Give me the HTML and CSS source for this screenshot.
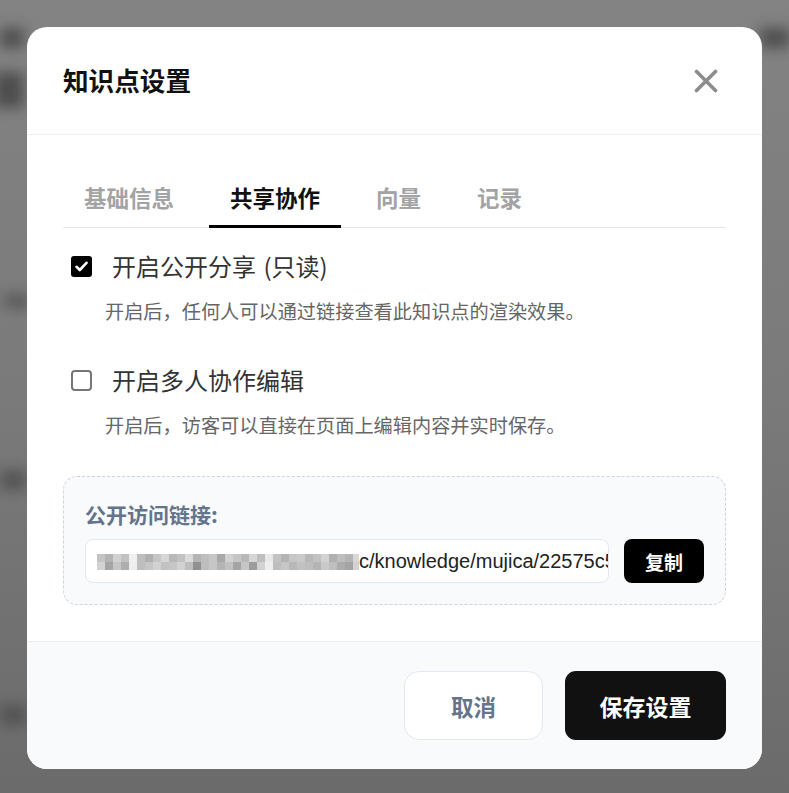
FILE: index.html
```html
<!DOCTYPE html>
<html lang="zh-CN">
<head>
<meta charset="utf-8">
<title>知识点设置</title>
<link rel="stylesheet" href="styles.css">
</head>
<body>
<div class="backdrop">
  <div class="blob b1"></div>
  <div class="blob b2"></div>
  <div class="blob b3"></div>
  <div class="blob b4"></div>
  <div class="blob b5"></div>
  <div class="blob b6"></div>
  <div class="blob b7"></div>
</div>
<div class="overlay">
  <div class="modal">
    <div class="modal-header">
      <h2 class="modal-title">知识点设置</h2>
      <button class="close-btn" aria-label="关闭">
        <svg width="24" height="24" viewBox="0 0 24 24"><path d="M2.5 2.5 L21.5 21.5 M21.5 2.5 L2.5 21.5" stroke="#8c8c8c" stroke-width="3.6" stroke-linecap="round" fill="none"/></svg>
      </button>
    </div>
    <div class="modal-body">
      <div class="tabs">
        <div class="tab">基础信息</div>
        <div class="tab active">共享协作</div>
        <div class="tab">向量</div>
        <div class="tab">记录</div>
      </div>

      <div class="option">
        <span class="checkbox checked">
          <svg width="13" height="11" viewBox="0 0 13 11"><path d="M1.5 5.8 L4.8 9 L11.5 1.8" stroke="#fff" stroke-width="2.6" fill="none" stroke-linecap="round" stroke-linejoin="round"/></svg>
        </span>
        <span class="option-label">开启公开分享 (只读)</span>
      </div>
      <p class="option-desc">开启后，任何人可以通过链接查看此知识点的渲染效果。</p>

      <div class="option second">
        <span class="checkbox"></span>
        <span class="option-label">开启多人协作编辑</span>
      </div>
      <p class="option-desc last">开启后，访客可以直接在页面上编辑内容并实时保存。</p>

      <div class="link-box">
        <div class="link-label">公开访问链接:</div>
        <div class="link-row">
          <div class="link-input">
            <span class="mosaic"><span class="mrow r1"></span><span class="mrow r2"></span></span><span class="link-text">c/knowledge/mujica/22575c5</span>
          </div>
          <button class="copy-btn">复制</button>
        </div>
      </div>
    </div>
    <div class="modal-footer">
      <button class="btn btn-cancel">取消</button>
      <button class="btn btn-save">保存设置</button>
    </div>
  </div>
</div>
</body>
</html>
```
FILE: styles.css
```css
* { box-sizing: border-box; }
html, body { margin: 0; padding: 0; }
body {
  width: 789px;
  height: 793px;
  overflow: hidden;
  font-family: "Noto Sans CJK SC", "Noto Sans", sans-serif;
  background: linear-gradient(180deg, #838383 0%, #7a7a7a 50%, #6b6b6b 100%);
  position: relative;
}
.backdrop {
  position: absolute;
  inset: 0;
  overflow: hidden;
}
.blob {
  position: absolute;
  background: #3c3c3c;
  filter: blur(7px);
  opacity: 0.75;
}
.b1 { left: 0; top: 28px; width: 24px; height: 20px; }
.b2 { left: -6px; top: 72px; width: 30px; height: 36px; }
.b3 { left: 760px; top: 28px; width: 30px; height: 20px; }
.b4 { left: 0; top: 295px; width: 26px; height: 6px; opacity: 0.3; }
.b5 { left: 6px; top: 296px; width: 24px; height: 12px; opacity: 0.55; }
.b6 { left: 0; top: 470px; width: 26px; height: 20px; opacity: 0.6; }
.b7 { left: 0; top: 705px; width: 26px; height: 20px; opacity: 0.55; }

.overlay {
  position: absolute;
  inset: 0;
  display: flex;
  justify-content: center;
  align-items: flex-start;
  padding-top: 27px;
}
.modal {
  width: 735px;
  background: #fff;
  border-radius: 20px;
  overflow: hidden;
}
.modal-header {
  height: 108px;
  padding: 0 36px;
  display: flex;
  align-items: center;
  justify-content: space-between;
  border-bottom: 1px solid #eeeeee;
}
.modal-title {
  margin: 0;
  font-size: 25.6px;
  font-weight: 700;
  color: #111;
  line-height: 1.2;
}
.close-btn {
  border: 0;
  background: none;
  padding: 0;
  width: 24px;
  height: 24px;
  margin-right: 8px;
  display: flex;
}
.modal-body {
  padding: 36px 36px 36px;
}
.tabs {
  display: flex;
  gap: 14px;
  border-bottom: 1px solid #e6e6e6;
}
.tab {
  padding: 11px 21px 13px;
  font-size: 22.5px;
  line-height: 30px;
  font-weight: 700;
  color: #a3a3a3;
  border-bottom: 3px solid transparent;
  margin-bottom: -1px;
}
.tab.active {
  color: #111;
  border-bottom-color: #000;
}
.option {
  display: flex;
  align-items: center;
  gap: 20px;
  margin: 22px 0 0 8px;
  height: 32px;
}
.option.second { margin-top: 39px; }
.checkbox {
  width: 21px;
  height: 21px;
  border: 2px solid #767676;
  border-radius: 4px;
  background: #fff;
  display: flex;
  align-items: center;
  justify-content: center;
  flex: none;
}
.checkbox.checked {
  background: #000;
  border-color: #000;
  border-radius: 3px;
}
.option-label {
  font-size: 24px;
  line-height: 32px;
  color: #333;
  word-spacing: 2px;
}
.option-desc {
  margin: 15px 0 0 42px;
  font-size: 19.2px;
  line-height: 28px;
  color: #666;
}
.link-box {
  margin-top: 37px;
  background: #f8fafc;
  border: 1px dashed #cbd5e1;
  border-radius: 14px;
  padding: 23px 21px 21px;
}
.link-label {
  font-size: 21px;
  line-height: 28px;
  font-weight: 700;
  color: #64748b;
}
.link-row {
  display: flex;
  gap: 15px;
  margin-top: 11px;
}
.link-input {
  width: 524px;
  height: 44px;
  background: #fff;
  border: 1px solid #e2e8f0;
  border-radius: 8px;
  padding: 0 11px;
  display: flex;
  align-items: center;
  overflow: hidden;
  white-space: nowrap;
}
.mosaic {
  display: inline-flex;
  flex-direction: column;
  flex: none;
  width: 262px;
  height: 16px;
  margin-top: 1px;
}
.mrow { display: block; height: 8px; width: 100%; }
.r1 {
  background: linear-gradient(90deg,
    #c4c4c4 0 8px, #b4b4b4 8px 16px, #d2d2d2 16px 24px, #c2c2c2 24px 32px,
    #f0f0f0 32px 40px, #bebebe 40px 48px, #b0b0b0 48px 56px, #c6c6c6 56px 64px,
    #d6d6d6 64px 72px, #b8b8b8 72px 80px, #c2c2c2 80px 88px, #dadada 88px 96px,
    #b4b4b4 96px 104px, #bebebe 104px 112px, #c6c6c6 112px 120px, #a8a8a8 120px 128px,
    #d2d2d2 128px 136px, #c6c6c6 136px 144px, #b8b8b8 144px 152px, #d6d6d6 152px 160px,
    #bebebe 160px 168px, #e8e8e8 168px 176px, #c2c2c2 176px 184px, #b4b4b4 184px 192px,
    #c6c6c6 192px 200px, #cacaca 200px 208px, #b8b8b8 208px 216px, #c2c2c2 216px 224px,
    #d2d2d2 224px 232px, #b0b0b0 232px 240px, #bebebe 240px 248px, #b4b4b4 248px 256px,
    #d8d8d8 256px 262px);
}
.r2 {
  background: linear-gradient(90deg,
    #d2d2d2 0 8px, #a4a4a4 8px 16px, #c6c6c6 16px 24px, #aeaeae 24px 32px,
    #eeeeee 32px 40px, #bebebe 40px 48px, #c6c6c6 48px 56px, #d2d2d2 56px 64px,
    #c2c2c2 64px 72px, #c6c6c6 72px 80px, #d2d2d2 80px 88px, #bebebe 88px 96px,
    #909090 96px 104px, #bebebe 104px 112px, #c6c6c6 112px 120px, #b4b4b4 120px 128px,
    #c2c2c2 128px 136px, #a4a4a4 136px 144px, #c6c6c6 144px 152px, #9c9c9c 152px 160px,
    #d2d2d2 160px 168px, #eeeeee 168px 176px, #bebebe 176px 184px, #c6c6c6 184px 192px,
    #b8b8b8 192px 200px, #c2c2c2 200px 208px, #bebebe 208px 216px, #b4b4b4 216px 224px,
    #cacaca 224px 232px, #bebebe 232px 240px, #acacac 240px 248px, #a4a4a4 248px 256px,
    #d2d2d2 256px 262px);
}
.link-text {
  font-family: "Liberation Sans", Arial, sans-serif;
  font-size: 20px;
  color: #222;
}
.copy-btn {
  width: 80px;
  height: 44px;
  border: 0;
  border-radius: 8px;
  background: #000;
  color: #fff;
  font-family: "Noto Sans CJK SC", sans-serif;
  font-size: 19px;
  font-weight: 700;
  padding: 0;
}
.modal-footer {
  background: #f8fafc;
  border-top: 1px solid #eeeeee;
  height: 128px;
  padding: 0 36px;
  display: flex;
  align-items: center;
  justify-content: flex-end;
  gap: 22px;
}
.btn {
  height: 69px;
  font-family: "Noto Sans CJK SC", sans-serif;
  font-size: 22.5px;
  font-weight: 700;
  padding: 0;
}
.btn-cancel {
  width: 139px;
  background: #fff;
  border: 1px solid #e2e8f0;
  border-radius: 15px;
  color: #64748b;
}
.btn-save {
  width: 161px;
  background: #111;
  border: 0;
  border-radius: 11px;
  color: #fff;
  font-size: 23px;
}
```
